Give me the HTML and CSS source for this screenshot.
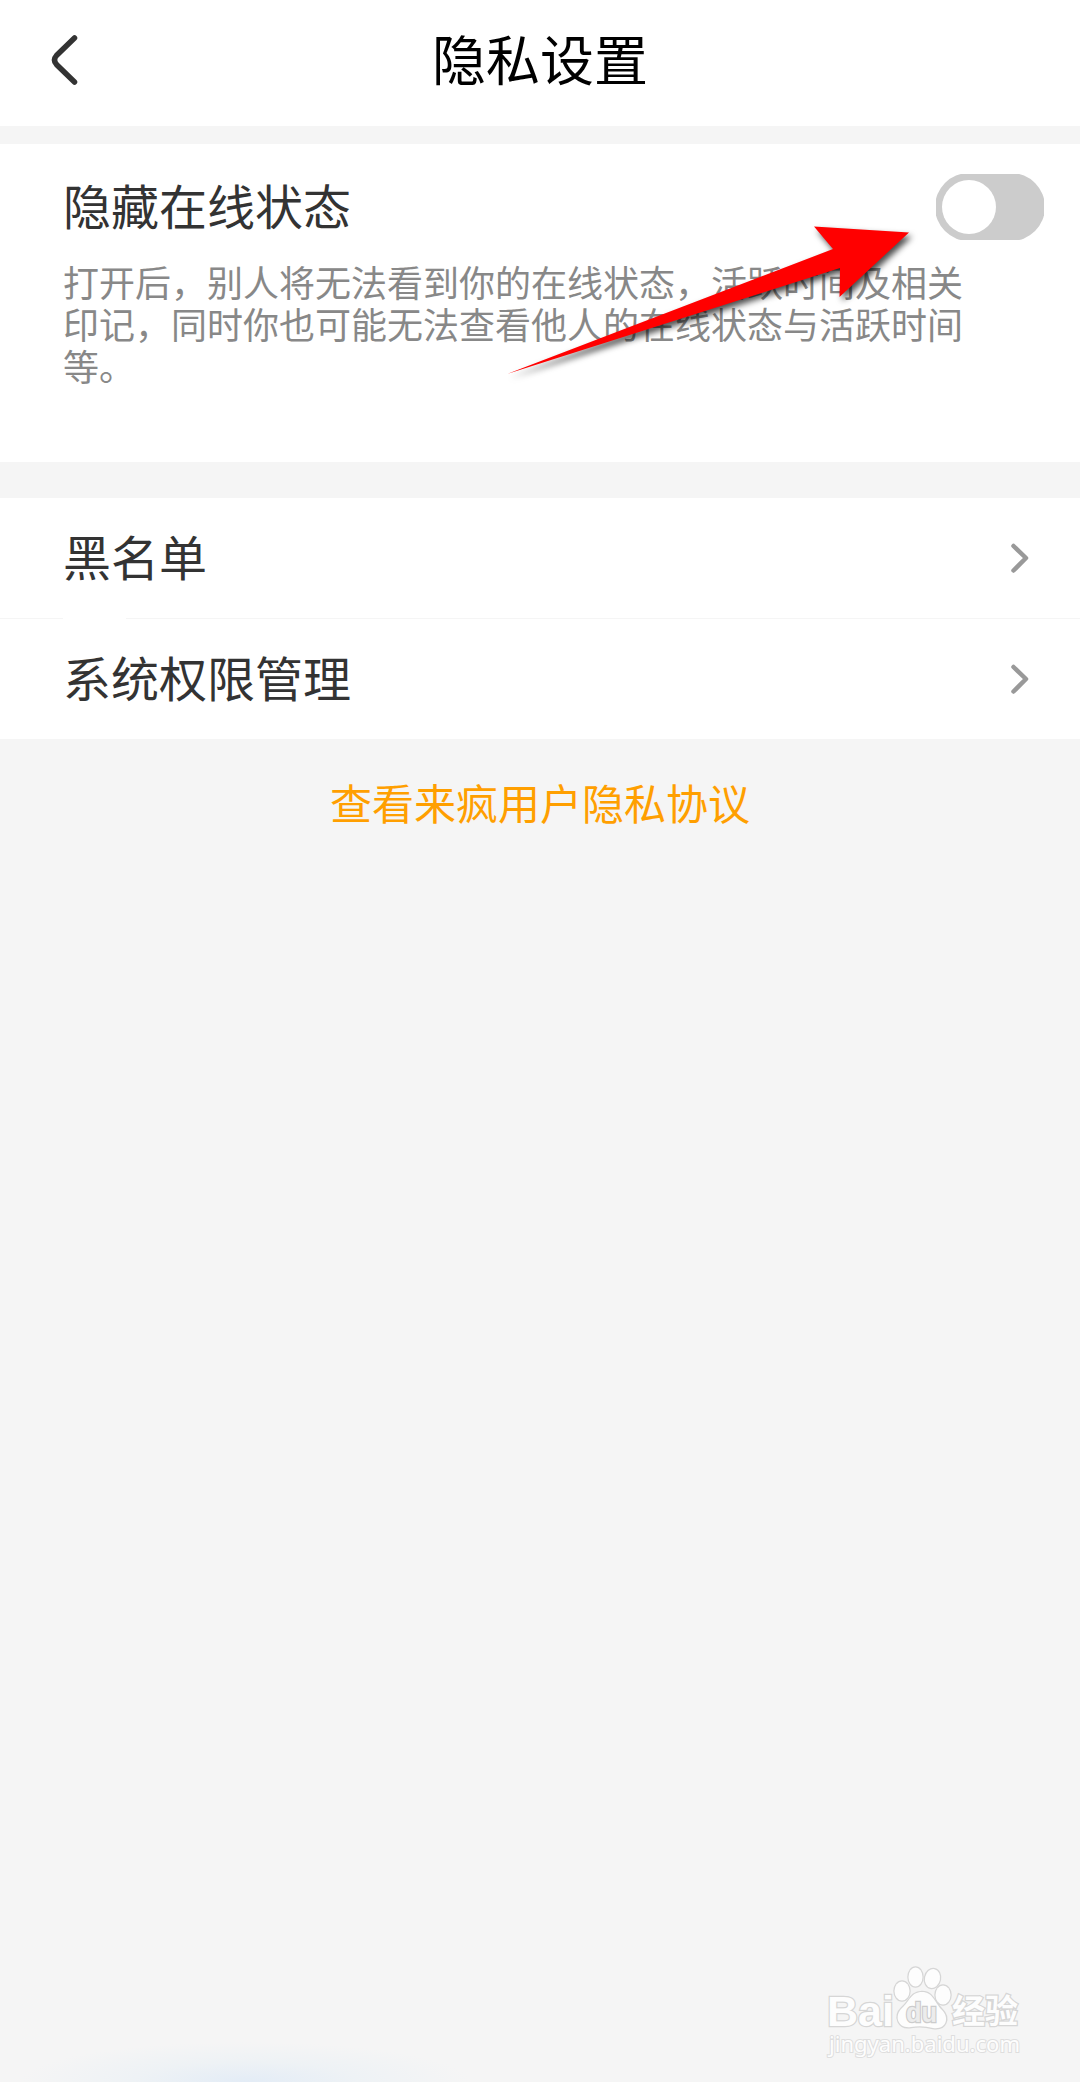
FILE: index.html
```html
<!DOCTYPE html>
<html lang="zh-CN">
<head>
    <meta charset="UTF-8">
    <meta name="viewport" content="width=device-width, initial-scale=1.0">
    <title>隐私设置</title>
    <link rel="stylesheet" href="styles.css">
</head>
<body>
    <div class="header">
        <svg class="back" width="36" height="56" viewBox="0 0 36 56">
            <path d="M26.5 6 L8.5 23.5 Q4.500 28 8.5 32.5 L26.5 50"/>
        </svg>
        <h1>隐私设置</h1>
    </div>
    <div class="status">
        <div class="status-top">
            <h2>隐藏在线状态</h2>
            <svg class="switch" width="108" height="66" viewBox="0 0 108 66">
                <rect x="-1" y="-1" width="110" height="68" rx="34" fill="#ccc"/>
                <circle cx="33" cy="33" r="27" fill="#fff"/>
            </svg>
        </div>
        <p>打开后，别人将无法看到你的在线状态，活跃时间及相关<br>印记，同时你也可能无法查看他人的在线状态与活跃时间<br>等。</p>
        <svg class="arrow" width="430" height="180" viewBox="0 0 430 180">
            <path d="M7 174 L333 49 L314 26.5 L409 32.5 L339.5 97 L340 68 Z"/>
        </svg>
    </div>
    <div class="list">
        <div class="row">
            <span>黑名单</span>
            <svg class="more" width="20" height="32" viewBox="0 0 20 32">
                <path d="M3.5 4 L16 16 L3.5 28.5"/>
            </svg>
        </div>
        <div class="line"></div>
        <div class="row">
            <span>系统权限管理</span>
            <svg class="more" width="20" height="32" viewBox="0 0 20 32">
                <path d="M3.5 4 L16 16 L3.5 28.5"/>
            </svg>
        </div>
    </div>
    <a class="agreement">查看来疯用户隐私协议</a>
    <div class="glow"></div>
    <svg class="watermark" width="210" height="104" viewBox="0 0 210 104">
        <text class="logo" x="7" y="66" font-size="43" textLength="67" lengthAdjust="spacingAndGlyphs">Bai</text>
        <g class="paw">
            <ellipse cx="82" cy="31" rx="7.5" ry="9.5"/>
            <ellipse cx="95.5" cy="17" rx="7" ry="9.5"/>
            <ellipse cx="112.5" cy="18.5" rx="7.5" ry="9.5" transform="rotate(12 112.5 18.5)"/>
            <ellipse cx="123" cy="35" rx="7.5" ry="9.5"/>
            <path d="M102 32 C91 32 90 41 82 48 C73 57 79 69 91 67 Q102 65 113 68 C126 70 130 58 122 50 C114 42 113 32 102 32 Z"/>
        </g>
        <text class="du" x="86" y="62" font-size="27" textLength="31" lengthAdjust="spacingAndGlyphs">du</text>
        <text class="logo cn" x="132" y="63" font-size="33">经验</text>
        <text class="site" x="9" y="92" font-size="22" textLength="191" lengthAdjust="spacingAndGlyphs">jingyan.baidu.com</text>
    </svg>
</body>
</html>
```

FILE: styles.css
```css
* {
    box-sizing: border-box;
}
body {
    margin: 0;
    position: relative;
    height: 2082px;
    overflow: hidden;
    background-color: #f5f5f5;
    font-family: "Noto Sans CJK SC", sans-serif;
    color: #333;
}
h1, h2, p {
    margin: 0;
    font-weight: 400;
}
.header {
    display: flex;
    align-items: center;
    height: 126px;
    padding: 0 48px;
    margin-bottom: 18px;
    background-color: white;
}
.header h1 {
    flex: 1;
    padding-right: 36px;
    margin-top: -10px;
    font-size: 54px;
    line-height: 80px;
    text-align: center;
    color: black;
}
.back {
    margin-top: -6px;
}
.back path {
    fill: none;
    stroke: #333;
    stroke-width: 5.5;
    stroke-linecap: round;
}
.status {
    position: relative;
    height: 318px;
    padding: 30px 36px 0 63px;
    margin-bottom: 36px;
    background-color: white;
}
.status-top {
    display: flex;
    justify-content: space-between;
    height: 86px;
}
.status h2 {
    font-size: 48px;
    line-height: 60px;
}
.status p {
    font-size: 36px;
    line-height: 42px;
    white-space: nowrap;
    color: #888;
}
.arrow {
    position: absolute;
    left: 500px;
    top: 56px;
    overflow: visible;
}
.arrow path {
    fill: red;
    filter: drop-shadow(3px 4px 3px rgba(0, 0, 0, 0.7));
}
.row {
    display: flex;
    align-items: center;
    justify-content: space-between;
    height: 120px;
    padding: 0 50px 0 63px;
    background-color: white;
}
.row span {
    margin-top: -7px;
    font-size: 48px;
    line-height: 70px;
}
.more path {
    fill: none;
    stroke: #999;
    stroke-width: 4.5;
    stroke-linecap: round;
    stroke-linejoin: round;
}
.line {
    width: 63px;
    height: 1px;
    margin-left: 63px;
    background-color: white;
}
.agreement {
    display: block;
    padding-top: 32px;
    font-size: 42px;
    line-height: 62px;
    text-align: center;
    color: #ff9f00;
}
.glow {
    position: absolute;
    left: 20px;
    bottom: 0;
    width: 450px;
    height: 40px;
    background: radial-gradient(ellipse 225px 40px at 50% 100%, #e3ecf6, #eef2f5 50%, #f5f5f5);
}
.watermark {
    position: absolute;
    left: 820px;
    top: 1960px;
}
.watermark text, .paw {
    fill: #fdfdfd;
    stroke: #d6d6d6;
    stroke-width: 2.5;
    paint-order: stroke;
}
.logo {
    font-family: "Liberation Sans", sans-serif;
    font-weight: 700;
}
.watermark .cn {
    font-family: "Noto Sans CJK SC", sans-serif;
}
.watermark .du {
    font-family: "Liberation Sans", sans-serif;
    font-weight: 700;
    fill: #ececec;
    stroke: #ccc;
}
.watermark .site {
    font-family: "Noto Sans", sans-serif;
    stroke: #dedede;
    stroke-width: 2;
}
```
